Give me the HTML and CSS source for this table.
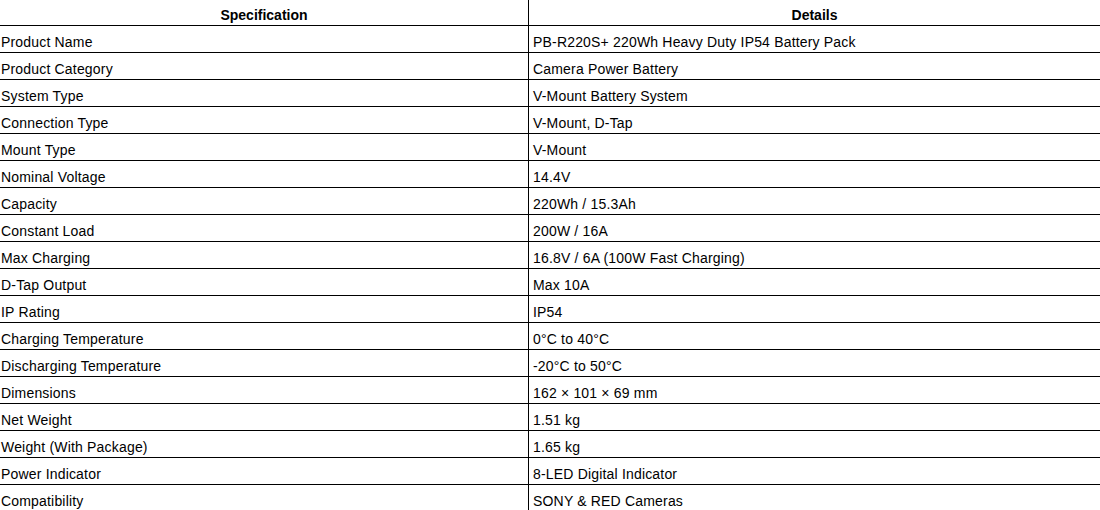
FILE: index.html
```html
<!DOCTYPE html>
<html>
<head>
<meta charset="utf-8">
<link rel="stylesheet" href="styles.css">
</head>
<body>
<table class="spec">
<thead>
<tr><th class="c1">Specification</th><th class="c2">Details</th></tr>
</thead>
<tbody>
<tr><td class="c1">Product Name</td><td class="c2">PB-R220S+ 220Wh Heavy Duty IP54 Battery Pack</td></tr>
<tr><td class="c1">Product Category</td><td class="c2">Camera Power Battery</td></tr>
<tr><td class="c1">System Type</td><td class="c2">V-Mount Battery System</td></tr>
<tr><td class="c1">Connection Type</td><td class="c2">V-Mount, D-Tap</td></tr>
<tr><td class="c1">Mount Type</td><td class="c2">V-Mount</td></tr>
<tr><td class="c1">Nominal Voltage</td><td class="c2">14.4V</td></tr>
<tr><td class="c1">Capacity</td><td class="c2">220Wh / 15.3Ah</td></tr>
<tr><td class="c1">Constant Load</td><td class="c2">200W / 16A</td></tr>
<tr><td class="c1">Max Charging</td><td class="c2">16.8V / 6A (100W Fast Charging)</td></tr>
<tr><td class="c1">D-Tap Output</td><td class="c2">Max 10A</td></tr>
<tr><td class="c1">IP Rating</td><td class="c2">IP54</td></tr>
<tr><td class="c1">Charging Temperature</td><td class="c2">0°C to 40°C</td></tr>
<tr><td class="c1">Discharging Temperature</td><td class="c2">-20°C to 50°C</td></tr>
<tr><td class="c1">Dimensions</td><td class="c2">162 × 101 × 69 mm</td></tr>
<tr><td class="c1">Net Weight</td><td class="c2">1.51 kg</td></tr>
<tr><td class="c1">Weight (With Package)</td><td class="c2">1.65 kg</td></tr>
<tr><td class="c1">Power Indicator</td><td class="c2">8-LED Digital Indicator</td></tr>
<tr><td class="c1">Compatibility</td><td class="c2">SONY &amp; RED Cameras</td></tr>
</tbody>
</table>
</body>
</html>
```
FILE: styles.css
```css
html, body {
  margin: 0;
  padding: 0;
  background: #fff;
}
body {
  font-family: "Liberation Sans", Arial, sans-serif;
  font-size: 14px;
  color: #000;
  overflow: hidden;
}
.spec {
  width: 1100px;
  border-collapse: collapse;
  table-layout: fixed;
}
.spec th, .spec td {
  line-height: 16px;
  border-bottom: 1px solid #000;
  text-align: left;
  white-space: nowrap;
  vertical-align: top;
}
.spec td {
  padding: 8px 1px 2px 1px;
  font-weight: normal;
  letter-spacing: 0.18px;
}
.spec th {
  padding: 7px 1px 2px 1px;
  font-weight: bold;
  text-align: center;
}
.spec .c1 {
  width: 526px;
  border-right: 1px solid #000;
}
.spec td.c2 {
  padding-left: 4px;
}
```
